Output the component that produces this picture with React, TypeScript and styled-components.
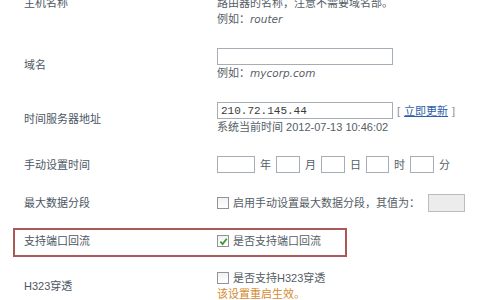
import React, { FC, ReactNode } from 'react';
import styled, { createGlobalStyle, css } from 'styled-components';

const GlobalStyle = createGlobalStyle`
  html, body {
    margin: 0;
    padding: 0;
    background: #ffffff;
    overflow: hidden;
  }
  body {
    font-family: 'Liberation Sans', 'Noto Sans CJK SC', sans-serif;
    font-size: 11px;
    color: #555d66;
  }
`;

const Form = styled.div`
  display: flex;
  flex-direction: column;
  gap: 21px;
  margin-top: -22px;
  padding-left: 24px;
  width: 456px;
`;

const Row = styled.div<{ $highlight?: boolean }>`
  position: relative;
  display: grid;
  grid-template-columns: 193px 1fr;
  align-items: center;
  ${({ $highlight }) =>
    $highlight &&
    css`
      &::after {
        content: '';
        position: absolute;
        left: -11px;
        top: -5px;
        width: 334px;
        bottom: -8px;
        box-sizing: border-box;
        border: 2px solid rgba(155, 60, 58, 0.85);
        pointer-events: none;
      }
    `}
`;

const Label = styled.div`
  color: #4c5663;
  line-height: 16px;
  white-space: nowrap;
`;

const Value = styled.div`
  display: flex;
  flex-direction: column;
  align-items: flex-start;
`;

const Line = styled.div<{ $tone?: 'warn' }>`
  display: flex;
  align-items: center;
  line-height: 16px;
  height: 16px;
  white-space: nowrap;
  color: ${({ $tone }) => ($tone === 'warn' ? '#d48a30' : '#555d66')};
`;

const Example = styled.span`
  font-family: 'DejaVu Sans', sans-serif;
  font-style: italic;
  font-size: 10.5px;
  color: #5a6068;
`;

const TextInput = styled.input<{ $w: number; $disabled?: boolean }>`
  box-sizing: border-box;
  width: ${({ $w }) => $w}px;
  height: ${({ $disabled }) => ($disabled ? 18 : 17)}px;
  margin: 0;
  padding: 0 3px;
  border: 1px solid ${({ $disabled }) => ($disabled ? '#b9bcc0' : '#a7adb5')};
  background: ${({ $disabled }) => ($disabled ? '#ececec' : '#ffffff')};
  font-family: 'Liberation Mono', monospace;
  font-size: 11px;
  color: #3a3a3a;
  outline: none;
`;

const Inline = styled.div`
  display: flex;
  align-items: center;
`;

const TimeFields = styled.div`
  display: flex;
  align-items: center;
  gap: 5px;
`;

const Unit = styled.span`
  line-height: 16px;
  color: #555d66;
`;

const Refresh = styled.span`
  margin-left: 4px;
  color: #8a9096;
  line-height: 16px;
  a {
    color: #2d5fa8;
    text-decoration: underline;
    margin: 0 4px;
  }
`;

const Box = styled.span`
  box-sizing: border-box;
  display: inline-flex;
  align-items: center;
  justify-content: center;
  width: 12px;
  height: 12px;
  margin-right: 4px;
  border: 1px solid #8e949a;
  background: linear-gradient(#f2f2f2, #ffffff);
`;

const Check = styled.svg`
  width: 9px;
  height: 9px;
`;

const Checkbox: FC<{ checked?: boolean }> = ({ checked }) => (
  <Box>
    {checked && (
      <Check viewBox="0 0 10 10">
        <path d="M1.5 5.2 L4 7.8 L8.6 2" fill="none" stroke="#3c9a2c" strokeWidth="2" />
      </Check>
    )}
  </Box>
);

const Spacer = styled.span`
  margin-left: 8px;
  display: inline-flex;
`;

interface FieldProps {
  label: string;
  highlight?: boolean;
  children: ReactNode;
}

const Field: FC<FieldProps> = ({ label, highlight, children }) => (
  <Row $highlight={highlight}>
    <Label>{label}</Label>
    <Value>{children}</Value>
  </Row>
);

const timeParts = [
  { w: 38, unit: '年' },
  { w: 24, unit: '月' },
  { w: 24, unit: '日' },
  { w: 23, unit: '时' },
  { w: 24, unit: '分' },
];

const App: FC = () => (
  <>
    <GlobalStyle />
    <Form>
      <Field label="主机名称">
        <TextInput $w={176} defaultValue="" />
        <Line>路由器的名称，注意不需要域名部。</Line>
        <Line>
          例如：<Example>router</Example>
        </Line>
      </Field>
      <Field label="域名">
        <TextInput $w={176} defaultValue="" />
        <Line>
          例如：<Example>mycorp.com</Example>
        </Line>
      </Field>
      <Field label="时间服务器地址">
        <Inline>
          <TextInput $w={176} defaultValue="210.72.145.44" />
          <Refresh>
            [<a href="#">立即更新</a>]
          </Refresh>
        </Inline>
        <Line>系统当前时间 2012-07-13 10:46:02</Line>
      </Field>
      <Field label="手动设置时间">
        <TimeFields>
          {timeParts.map((p) => (
            <React.Fragment key={p.unit}>
              <TextInput $w={p.w} defaultValue="" />
              <Unit>{p.unit}</Unit>
            </React.Fragment>
          ))}
        </TimeFields>
      </Field>
      <Field label="最大数据分段">
        <Inline>
          <Checkbox />
          <Line>启用手动设置最大数据分段，其值为：</Line>
          <Spacer>
            <TextInput $w={37} $disabled disabled defaultValue="" />
          </Spacer>
        </Inline>
      </Field>
      <Field label="支持端口回流" highlight>
        <Inline>
          <Checkbox checked />
          <Line>是否支持端口回流</Line>
        </Inline>
      </Field>
      <Field label="H323穿透">
        <Inline>
          <Checkbox />
          <Line>是否支持H323穿透</Line>
        </Inline>
        <Line $tone="warn">该设置重启生效。</Line>
      </Field>
    </Form>
  </>
);

export default App;
